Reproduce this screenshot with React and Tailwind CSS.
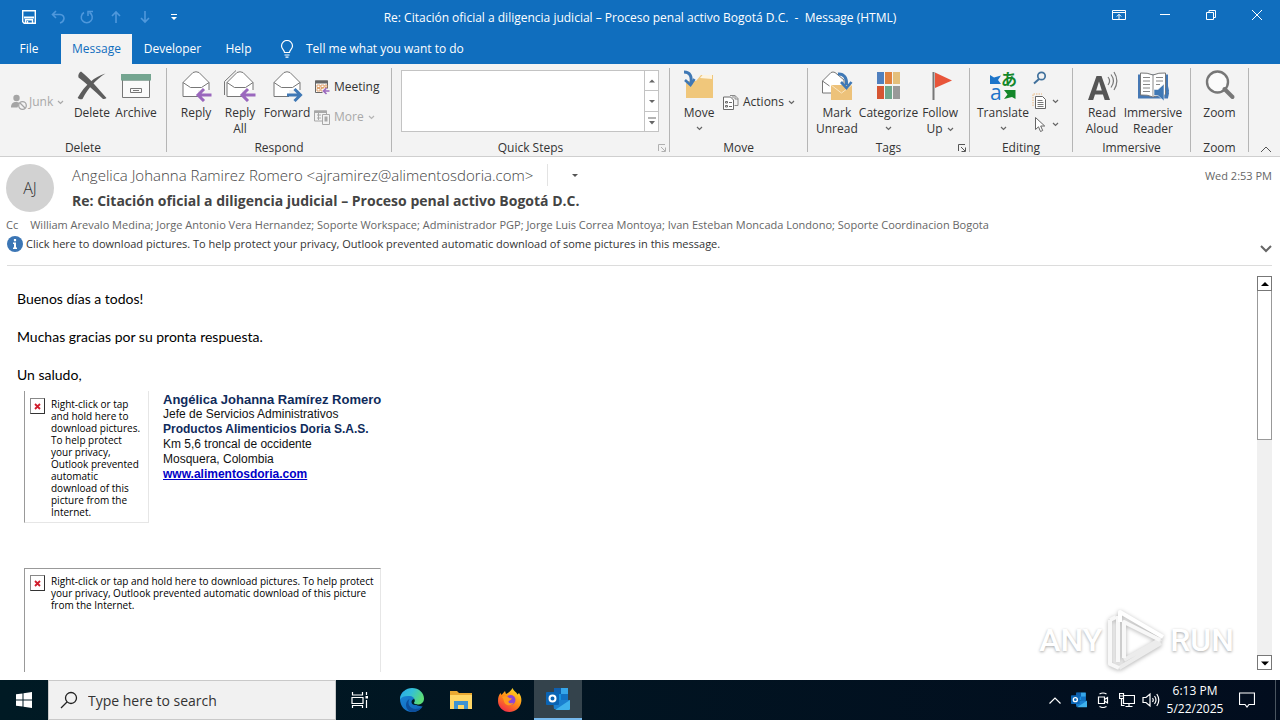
import React from 'react';

const UI = "font-['Open_Sans','Noto_Sans',sans-serif]";

function Caret({ className = '' }) {
  return (
    <svg viewBox="0 0 7 5" className={`h-[5px] w-[7px] shrink-0 ${className}`} fill="none" stroke="currentColor" strokeWidth="1.2">
      <path d="M1 1l2.500 2.500L6 1" />
    </svg>
  );
}

function Triangle({ up = false, bar = false, className = '' }) {
  return (
    <svg viewBox="0 0 8 8" className={`h-2 w-2 shrink-0 ${className}`} fill="currentColor">
      {bar && <path d="M0 0.500h8v1H0z" />}
      <path d={up ? 'M0 6l4-4 4 4z' : bar ? 'M1 4h6L4 7.500z' : 'M0 2.500h8L4 6.500z'} />
    </svg>
  );
}

/* ---------- ribbon icons ---------- */

const Ico = ({ children, className = 'h-8 w-8', box = '0 0 32 32' }) => (
  <svg viewBox={box} className={`${className} shrink-0`} fill="none">
    {children}
  </svg>
);

const DeleteIcon = () => (
  <Ico>
    <path d="M5 1.500C13 8 21 17 30.500 28c-1 1-2.300 1.300-3.500 1C18 20.500 10 13 2.500 7.500 1.800 5 3 2.500 5 1.500z" fill="#5d5d5d" />
    <path d="M29.500 3.500C20 9.500 12.500 17.500 6.500 29c-1.800.6-3.800.2-4.800-1.200C9 15 18 7 29.500 3.500z" fill="#5d5d5d" />
  </Ico>
);

const ArchiveIcon = () => (
  <Ico>
    <path d="M2.500 10h27v17.500h-27z" fill="#fafafa" stroke="#777" />
    <path d="M1 4h30v6.500H1z" fill="#74a590" />
    <path d="M10.500 18.500h11v4h-11z" stroke="#777" />
    <path d="M13 20.500h6" stroke="#777" />
  </Ico>
);

function Envelope() {
  return (
    <>
      <path d="M3 12.500L13 2.500q3-1.500 6 0l10 10v14H3z" fill="#fff" stroke="#777" strokeLinejoin="round" />
      <path d="M3 12.500l7.500 5h11l7.500-5" stroke="#777" />
    </>
  );
}

const ArrowLeft = () => (
  <>
    <path d="M18 20h13v11H18z" fill="#f3f3f3" />
    <path d="M31.500 25H18M24 19l-6 6 6 6" stroke="#9a67bd" strokeWidth="3" />
  </>
);

const ReplyIcon = () => (
  <Ico><Envelope /><ArrowLeft /></Ico>
);

const ReplyAllIcon = () => (
  <Ico>
    <path d="M.500 25V11.500L12 .500" stroke="#777" />
    <Envelope /><ArrowLeft />
  </Ico>
);

const ForwardIcon = () => (
  <Ico>
    <Envelope />
    <path d="M18 20h13v11H18z" fill="#f3f3f3" />
    <path d="M16 25h13.500M23.500 19l6 6-6 6" stroke="#3f78b5" strokeWidth="3" />
  </Ico>
);

const JunkIcon = () => (
  <Ico className="h-4 w-4" box="0 0 16 16">
    <circle cx="5.500" cy="4" r="3.200" fill="#a5a5a5" />
    <path d="M0 13.500C0 9.500 2 8 5 8c1.500 0 2.500.3 3.300 1L6.500 13.500z" fill="#a5a5a5" />
    <circle cx="11.500" cy="11.500" r="3.800" stroke="#a5a5a5" strokeWidth="1.300" fill="#f3f3f3" />
    <path d="M9 9l5 5" stroke="#a5a5a5" strokeWidth="1.300" />
  </Ico>
);

const MeetingIcon = () => (
  <Ico className="h-4 w-4" box="0 0 16 16">
    <path d="M1.500 2h12v11.500h-12z" fill="#fff" stroke="#666" />
    <path d="M1 1.500h13v3H1z" fill="#666" />
    <path d="M3 6h3v2.500H3zM7 6h3v2.500H7zM3 9.500h3V12H3zM7 9.500h3V12H7zM11 6h2v2.500h-2z" stroke="#d99152" strokeWidth=".8" />
    <path d="M8.500 9.500H16V16H8.500z" fill="#f3f3f3" />
    <path d="M15.500 12H9.500M12.500 9l-3 3 3 3" stroke="#9a67bd" strokeWidth="1.600" />
  </Ico>
);

const MoreIcon = () => (
  <Ico className="h-4 w-4" box="0 0 16 16">
    <path d="M.500 2h12v10h-12z" stroke="#a8a8a8" />
    <path d="M0 1.500h13V4H0z" fill="#a8a8a8" />
    <path d="M3 6h4M3 9h4M4.500 4v7" stroke="#a8a8a8" />
    <path d="M8.500 5.500h7v10h-7z" fill="#f3f3f3" stroke="#a8a8a8" />
    <path d="M10.500 7.500h3v5h-3z" fill="#a8a8a8" />
  </Ico>
);

const MoveIcon = () => (
  <Ico>
    <path d="M3 11h10l5-6h12v23H3z" fill="#f0c77b" />
    <path d="M17 8l2.500-3H29v4z" fill="#fdf3df" />
    <path d="M1 2c6 0 8 4 7 12" stroke="#3f78b5" strokeWidth="3" />
    <path d="M2 10l5.500 5 4-6" stroke="#3f78b5" strokeWidth="2.600" />
  </Ico>
);

const ActionsIcon = () => (
  <Ico className="h-4 w-4" box="0 0 16 16">
    <path d="M.500 3h7l3 3v9.500h-10z" fill="#fff" stroke="#6b6b6b" />
    <path d="M7 1.500h5l3 3v7h-3.500M10 1v3M12 1.500V5h3" stroke="#8a8a8a" />
    <path d="M2.500 7.500h2v1.500h-2zM2.500 11.500h2V13h-2zM6 8.500h3M6 12.500h3" stroke="#6b6b6b" />
  </Ico>
);

const MarkUnreadIcon = () => (
  <Ico>
    <path d="M1.500 11L10 2.500q2-1 4 0L23 10v13H1.500z" fill="#fff" stroke="#777" />
    <path d="M1.500 11l7 5" stroke="#777" />
    <path d="M10 15h21v15H10z" fill="#edc27a" />
    <path d="M10 15l10.500 8L31 15" stroke="#fbe6c0" />
    <path d="M17 4c6-.5 9 4 8.500 11" stroke="#3f78b5" strokeWidth="3" />
    <path d="M20 12l5.500 6 5-6" stroke="#3f78b5" strokeWidth="2.600" />
  </Ico>
);

const CategorizeIcon = () => (
  <Ico>
    <path d="M4 2h7v12H4z" fill="#4f7fbe" />
    <path d="M12 2h7v12h-7z" fill="#e0813f" />
    <path d="M20 2h7v12h-7z" fill="#e4bf7b" />
    <path d="M4 16h7v13H4z" fill="#d65532" />
    <path d="M12 16h7v13h-7z" fill="#6fa68c" />
    <path d="M20 16h7v13h-7z" fill="#999" />
  </Ico>
);

const FlagIcon = () => (
  <Ico>
    <path d="M9.500 2v28" stroke="#777" strokeWidth="2" />
    <path d="M11 2.500l17 8-17 7.500z" fill="#e8553a" />
  </Ico>
);

const TranslateIcon = () => (
  <div className="relative h-8 w-8 shrink-0">
    <Ico>
      <path d="M3 5l4 2.500 7-2-3 4.500 3 4H3z" fill="#1c74c9" />
      <path d="M17 20h11.500v9l-3.500-2-8 2 3.500-4.500z" fill="#13872a" />
    </Ico>
    <span className="absolute left-[3px] top-3 text-[21px] leading-5 text-[#1c74c9]">a</span>
    <span className="absolute left-[14px] top-0 font-['Noto_Sans_CJK_JP',sans-serif] text-[16px] font-bold leading-4 text-[#13872a]">あ</span>
  </div>
);

const FindIcon = () => (
  <Ico className="h-4 w-4" box="0 0 16 16">
    <circle cx="9.500" cy="6" r="3.700" stroke="#41719c" strokeWidth="1.700" />
    <path d="M7 9l-5 4.500" stroke="#41719c" strokeWidth="2" />
  </Ico>
);

const RelatedIcon = () => (
  <Ico className="h-4 w-4" box="0 0 16 16">
    <path d="M1 13V1h9" stroke="#e9b77d" strokeDasharray="1.500 1" />
    <path d="M3.500 3.500h7l3 3v9h-10z" fill="#fff" stroke="#666" />
    <path d="M5.500 7.500h5M5.500 9.500h6M5.500 11.500h6M5.500 13.500h6" stroke="#777" />
  </Ico>
);

const SelectIcon = () => (
  <Ico className="h-4 w-4" box="0 0 16 16">
    <path d="M3.500 1.500v12l3-2.700 2 4.700 2.200-1-2-4.500h4z" fill="#fff" stroke="#666" />
  </Ico>
);

const ReadAloudIcon = () => (
  <Ico>
    <path d="M2 30L10.500 6h5L24 30h-5.300l-1.800-5.500H9L7.200 30zM10.200 20.500h5.600L13 11.500z" fill="#555" fillRule="evenodd" />
    <path d="M22 7c2 2.500 2 5.500 0 8M25 4.500c3 4 3 9 0 13M28 2c3.500 5.500 3.500 12.500 0 18" stroke="#777" strokeWidth="1.200" />
  </Ico>
);

const ReaderIcon = () => (
  <Ico>
    <path d="M1 4.500h30v24H1z" fill="#4678b4" />
    <path d="M3.500 3q7-.5 12.500 2 5.500-2.500 12.500-2v22q-7-.5-12.500 2-5.500-2.500-12.500-2z" fill="#fff" stroke="#777" />
    <path d="M16 5v21M6 7.500h7M6 11h7M6 14.500h7M6 18h7M6 21.500h7M19 7.500h7M19 11h7M19 14.500h4" stroke="#888" />
    <path d="M17 19.500h4l6-5.500v17l-6-5.500h-4z" fill="#3f78b5" stroke="#f3f3f3" strokeWidth=".6" />
    <path d="M28.500 18q2.500 4 0 8.500M30.500 16q2.500 6 0 12" stroke="#3f78b5" />
  </Ico>
);

const ZoomIcon = () => (
  <Ico>
    <circle cx="13.500" cy="12" r="10.500" fill="#fbfbfb" stroke="#777" strokeWidth="2.400" />
    <path d="M20.500 19l8 8" stroke="#777" strokeWidth="4" strokeLinecap="round" />
  </Ico>
);

/* ---------- ribbon building blocks ---------- */

function BigButton({ icon, lines, width, menu, inlineMenu }) {
  return (
    <button type="button" className={`flex flex-col items-center pt-[6px] leading-4 ${width}`}>
      {icon}
      <span className="mt-[3px] flex flex-col items-center whitespace-nowrap">
        {lines.map((l, i) => (
          <span key={l} className="flex items-center gap-1">
            {l}
            {inlineMenu && i === lines.length - 1 && <Caret className="text-[#666]" />}
          </span>
        ))}
      </span>
      {menu && <Caret className="mt-[5px] text-[#666]" />}
    </button>
  );
}

function SmallButton({ icon, label, name, menu, muted }) {
  return (
    <button type="button" aria-label={name} className={`flex h-5 items-center gap-1 whitespace-nowrap ${muted ? 'text-[#a8a8a8]' : ''}`}>
      {icon}
      {label}
      {menu && <Caret className={muted ? 'text-[#b5b5b5]' : 'text-[#666]'} />}
    </button>
  );
}

function Launcher({ muted }) {
  return (
    <button type="button" aria-label="More options" className={`absolute bottom-0 right-[3px] ${muted ? 'text-[#b0b0b0]' : 'text-[#555]'}`}>
      <svg viewBox="0 0 8 8" className="h-2 w-2" fill="none" stroke="currentColor">
        <path d="M.500 7V.500H7M3 3l4 4M7.500 3.500v4h-4" />
      </svg>
    </button>
  );
}

function Group({ label, width, launcher, children }) {
  return (
    <section className={`relative my-1 flex shrink-0 flex-col border-r border-[#b5b5b5] ${width}`}>
      <div className="-mt-1 flex flex-1 px-[7px]">{children}</div>
      <h2 className="-mb-1 text-center leading-4">{label}</h2>
      {launcher && <Launcher muted={launcher === 'muted'} />}
    </section>
  );
}

/* ---------- window chrome ---------- */

function QuickAccess() {
  const b = 'flex h-[34px] w-[29px] items-center justify-center';
  return (
    <div className="flex pl-[14px] text-[#4f98dc]">
      <button type="button" aria-label="Save" className={`${b} text-white`}>
        <svg viewBox="0 0 14 14" className="h-[14px] w-[14px]" fill="none" stroke="currentColor" strokeWidth="1.400">
          <path d="M.700.700h12.600v12.600H2.200L.700 11.800z" />
          <path d="M2 7.500h10" strokeWidth="2" />
          <path d="M3.500 13V9.700h7V13M5.500 11v2" />
        </svg>
      </button>
      <button type="button" aria-label="Undo" className={b}>
        <svg viewBox="0 0 14 14" className="h-[14px] w-[14px]" fill="none" stroke="currentColor" strokeWidth="1.600">
          <path d="M5 1L1.500 4.500 5 8M1.500 4.500H9q4 .5 4 4.200Q12.500 12 9 13" />
        </svg>
      </button>
      <button type="button" aria-label="Redo" className={b}>
        <svg viewBox="0 0 14 14" className="h-[14px] w-[14px]" fill="none" stroke="currentColor" strokeWidth="1.500">
          <path d="M9.500 2.500A5.500 5.500 0 1 1 4 2.500M8 6V1.500h5" />
        </svg>
      </button>
      <button type="button" aria-label="Previous item" className={b}>
        <svg viewBox="0 0 14 14" className="h-[14px] w-[14px]" fill="none" stroke="currentColor" strokeWidth="1.600">
          <path d="M7 13V2M3 6l4-4 4 4" />
        </svg>
      </button>
      <button type="button" aria-label="Next item" className={b}>
        <svg viewBox="0 0 14 14" className="h-[14px] w-[14px]" fill="none" stroke="currentColor" strokeWidth="1.600">
          <path d="M7 1v11M3 8l4 4 4-4" />
        </svg>
      </button>
      <button type="button" aria-label="Customize toolbar" className={`${b} text-white`}>
        <svg viewBox="0 0 6 6" className="h-[6px] w-[6px]" fill="currentColor"><path d="M0 0h6v1H0zM0 3h6L3 6z" /></svg>
      </button>
    </div>
  );
}

function WindowControls() {
  const b = 'flex h-[30px] w-[46px] items-center justify-center';
  const s = { fill: 'none', stroke: 'currentColor', viewBox: '0 0 14 12' };
  return (
    <div className="flex justify-end text-white">
      <button type="button" aria-label="Ribbon display options" className={b}>
        <svg {...s} className="h-3 w-[14px]"><path d="M.500 1.500h13v9H.500zM.500 3.500h13M7 10V5.500M4.800 7.500L7 5.300l2.200 2.200" /></svg>
      </button>
      <button type="button" aria-label="Minimize" className={b}>
        <svg {...s} className="h-3 w-[14px]"><path d="M2 5.500h10" /></svg>
      </button>
      <button type="button" aria-label="Restore" className={b}>
        <svg {...s} className="h-3 w-[14px]"><path d="M2.500 3.500h7v7h-7zM5 3.500V1.500h6.500v7h-2" /></svg>
      </button>
      <button type="button" aria-label="Close" className={b}>
        <svg {...s} className="h-3 w-[14px]"><path d="M2 1l10 10M12 1L2 11" /></svg>
      </button>
    </div>
  );
}

function Ribbon() {
  return (
    <div className="flex h-[93px] border-b border-[#cfcfcf] bg-[#f3f3f3] text-xs text-[#333]">
      <Group label="Delete" width="w-[167px]">
        <div className="flex w-[63px] items-center pl-1">
          <button type="button" className="flex items-center gap-[2px] text-[#a8a8a8]">
            <JunkIcon />Junk<Caret className="ml-[2px]" />
          </button>
        </div>
        <BigButton icon={<DeleteIcon />} lines={['Delete']} width="w-11" />
        <BigButton icon={<ArchiveIcon />} lines={['Archive']} width="w-11" />
      </Group>
      <Group label="Respond" width="w-[225px]">
        <BigButton icon={<ReplyIcon />} lines={['Reply']} width="w-11" />
        <BigButton icon={<ReplyAllIcon />} lines={['Reply', 'All']} width="w-11" />
        <BigButton icon={<ForwardIcon />} lines={['Forward']} width="w-[50px]" />
        <div className="flex flex-col gap-[10px] pl-[2px] pt-[13px]">
          <SmallButton icon={<MeetingIcon />} label="Meeting" />
          <SmallButton icon={<MoreIcon />} label="More" menu muted />
        </div>
      </Group>
      <Group label="Quick Steps" width="w-[278px]" launcher="muted">
        <div className="ml-[2px] mr-[3px] mt-[6px] flex h-[62px] flex-1 border border-[#c3c3c3] bg-white">
          <div className="flex-1" />
          <div className="flex w-[14px] flex-col divide-y divide-[#c3c3c3] border-l border-[#c3c3c3] text-[#666]">
            <button type="button" aria-label="Scroll up" className="flex flex-1 items-center justify-center"><Triangle up className="h-[6px] w-[6px]" /></button>
            <button type="button" aria-label="Scroll down" className="flex flex-1 items-center justify-center"><Triangle className="h-[6px] w-[6px]" /></button>
            <button type="button" aria-label="Show all" className="flex flex-1 items-center justify-center"><Triangle bar /></button>
          </div>
        </div>
      </Group>
      <Group label="Move" width="w-[138px]">
        <BigButton icon={<MoveIcon />} lines={['Move']} width="w-11" menu />
        <div className="flex items-center pl-[2px]">
          <SmallButton icon={<ActionsIcon />} label="Actions" menu />
        </div>
      </Group>
      <Group label="Tags" width="w-[162px]" launcher="dark">
        <BigButton icon={<MarkUnreadIcon />} lines={['Mark', 'Unread']} width="w-11" />
        <BigButton icon={<CategorizeIcon />} lines={['Categorize']} width="w-[60px]" menu />
        <BigButton icon={<FlagIcon />} lines={['Follow', 'Up']} width="w-11" inlineMenu />
      </Group>
      <Group label="Editing" width="w-[103px]">
        <BigButton icon={<TranslateIcon />} lines={['Translate']} width="w-[52px]" menu />
        <div className="flex flex-col gap-[3px] pl-[3px] pt-1">
          <SmallButton icon={<FindIcon />} name="Find" />
          <SmallButton icon={<RelatedIcon />} name="Related" menu />
          <SmallButton icon={<SelectIcon />} name="Select" menu />
        </div>
      </Group>
      <Group label="Immersive" width="w-[118px]">
        <BigButton icon={<ReadAloudIcon />} lines={['Read', 'Aloud']} width="w-11" />
        <BigButton icon={<ReaderIcon />} lines={['Immersive', 'Reader']} width="w-[58px]" />
      </Group>
      <Group label="Zoom" width="w-[58px]">
        <BigButton icon={<ZoomIcon />} lines={['Zoom']} width="w-full" />
      </Group>
      <div className="flex flex-1 items-end justify-end pb-[3px] pr-2">
        <button type="button" aria-label="Collapse ribbon">
          <svg viewBox="0 0 12 7" className="h-[7px] w-3" fill="none" stroke="#555"><path d="M1 6l5-5 5 5" /></svg>
        </button>
      </div>
    </div>
  );
}

/* ---------- message ---------- */

function MessageHeader() {
  return (
    <header className="ml-[7px] mr-2 border-b border-[#dcdcdc] pb-3 pt-[7px] text-[#666]">
      <div className="-ml-[1px] flex">
        <div className="flex h-12 w-12 shrink-0 items-center justify-center rounded-full bg-[#d2d2d2] text-base font-light text-[#333]">AJ</div>
        <div className="ml-[18px] min-w-0 flex-1">
          <div className="flex h-[22px] items-center">
            <span className="whitespace-nowrap text-[15px] font-light leading-5 text-[#444]">Angelica Johanna Ramirez Romero &lt;ajramirez@alimentosdoria.com&gt;</span>
            <span className="ml-[14px] h-[22px] border-l border-[#e3e3e3]" />
            <button type="button" aria-label="More actions" className="ml-6 text-[#555]"><Triangle className="h-[6px] w-[6px]" /></button>
          </div>
          <h1 className="mt-[5px] whitespace-nowrap text-sm font-bold leading-5 text-[#444]">Re: Citación oficial a diligencia judicial – Proceso penal activo Bogotá D.C.</h1>
        </div>
        <time className="pt-1 text-[11px] leading-4">Wed 2:53 PM</time>
      </div>
      <div className="-ml-[1px] mt-[5px] flex gap-3 whitespace-nowrap text-[11px] leading-4">
        <span>Cc</span>
        <span>William Arevalo Medina; Jorge Antonio Vera Hernandez; Soporte Workspace; Administrador PGP; Jorge Luis Correa Montoya; Ivan Esteban Moncada Londono; Soporte Coordinacion Bogota</span>
      </div>
      <div className="mt-[3px] flex items-start justify-between">
        <button type="button" className="flex items-center gap-[3px] text-[11px] leading-4 text-[#333]">
          <svg viewBox="0 0 16 16" className="h-4 w-4">
            <circle cx="8" cy="8" r="8" fill="#3c76b5" />
            <path d="M6.900 3h2.200v2.200H6.900zM6 6.500h3v5h1V13H6v-1.500h1V8H6z" fill="#fff" />
          </svg>
          Click here to download pictures. To help protect your privacy, Outlook prevented automatic download of some pictures in this message.
        </button>
        <button type="button" aria-label="Expand header" className="pt-[9px]">
          <svg viewBox="0 0 12 8" className="h-2 w-3" fill="none" stroke="#666" strokeWidth="2"><path d="M1 1l5 5 5-5" /></svg>
        </button>
      </div>
    </header>
  );
}

function BlockedPicture({ lines, className }) {
  return (
    <div className={`flex gap-[6px] overflow-hidden border border-[#e6e6e6] border-l-[#999] pl-[5px] ${className}`}>
      <span className="flex h-4 w-[15px] shrink-0 items-center justify-center border border-[#888] border-b-[#333] border-r-[#333] bg-white">
        <svg viewBox="0 0 7 7" className="h-[7px] w-[7px]" stroke="#d01c2c" strokeWidth="1.800"><path d="M1 1l5 5M6 1L1 6" /></svg>
      </span>
      <p className="whitespace-nowrap text-[10px] leading-3 text-black">
        {lines.map((l) => <span key={l} className="block">{l}</span>)}
      </p>
    </div>
  );
}

function ScrollBar() {
  const b = 'flex h-[15px] w-[15px] items-center justify-center border border-[#777] bg-white text-black';
  return (
    <div className="mb-[2px] flex w-[15px] shrink-0 flex-col bg-[#f0f0f0]">
      <button type="button" aria-label="Scroll up" className={b}><Triangle up /></button>
      <div className="h-[149px] border border-t-0 border-[#999] bg-white" />
      <div className="flex-1" />
      <button type="button" aria-label="Scroll down" className={b}><Triangle /></button>
    </div>
  );
}

function MessageBody() {
  return (
    <main className="mb-2 mt-[10px] flex min-h-0 flex-1 overflow-hidden pr-2">
      <div className="min-w-0 flex-1 pl-[17px] pt-[13px] text-black">
        <div className="flex flex-col gap-[19px] font-['Lato',sans-serif] text-sm leading-[19px]">
          <p>Buenos días a todos!</p>
          <p>Muchas gracias por su pronta respuesta.</p>
          <p>Un saludo,</p>
        </div>
        <div className="ml-[7px] mt-[7px] flex gap-[14px]">
          <BlockedPicture
            className="h-[132px] w-[125px] border-t-0 pb-[5px] pt-[7px]"
            lines={['Right-click or tap', 'and hold here to', 'download pictures.', 'To help protect', 'your privacy,', 'Outlook prevented', 'automatic', 'download of this', 'picture from the', 'Internet.']}
          />
          <address className="whitespace-nowrap pt-[1px] font-['Liberation_Sans',Arial,sans-serif] text-xs not-italic leading-[15px] text-[#111]">
            <div className="text-[13px] font-bold text-[#0f2b5b]">Angélica Johanna Ramírez Romero</div>
            <div>Jefe de Servicios Administrativos</div>
            <div className="font-bold text-[#0f2b5b]">Productos Alimenticios Doria S.A.S.</div>
            <div>Km 5,6 troncal de occidente</div>
            <div>Mosquera, Colombia</div>
            <a href="#site" className="font-bold text-[#0000c8] underline">www.alimentosdoria.com</a>
          </address>
        </div>
        <BlockedPicture
          className="ml-[7px] mt-[45px] h-[160px] w-[357px] border-t-[#999] pt-[6px]"
          lines={['Right-click or tap and hold here to download pictures. To help protect', 'your privacy, Outlook prevented automatic download of this picture', 'from the Internet.']}
        />
      </div>
      <ScrollBar />
    </main>
  );
}

function Watermark() {
  const t = "font-['Roboto',sans-serif] text-[32px] font-medium leading-none text-white [text-shadow:0_1px_3px_rgba(0,0,0,0.35)]";
  return (
    <div className="pointer-events-none absolute bottom-[48px] right-[46px] flex items-center gap-1">
      <span className={t}>ANY</span>
      <svg viewBox="0 0 60 64" className="h-16 w-[60px] overflow-visible drop-shadow-[0_1px_2px_rgba(0,0,0,0.3)]" fill="none" strokeWidth="4" strokeLinejoin="round">
        <path d="M18 52l37-21M13 60l42-25" stroke="#ececec" />
        <path d="M4 12v44l9 4M4 12l6-3M12 8v46M18 50V14l36 18" stroke="#f8f8f8" />
        <path d="M14 14V4l43 25" stroke="#fff" />
      </svg>
      <span className={t}>RUN</span>
    </div>
  );
}

/* ---------- taskbar ---------- */

function OutlookLogo({ className }) {
  return (
    <svg viewBox="0 0 24 24" className={className}>
      <path d="M8 1h14v12H8z" fill="#1490df" />
      <path d="M8 1h7v6H8z" fill="#0f5fae" />
      <path d="M15 1h7v6h-7z" fill="#36a6ea" />
      <path d="M15 7h7v6h-7z" fill="#1272c4" />
      <path d="M7 13h8l9 0v9H8z" fill="#1a80d0" />
      <path d="M9 23l15-10v9q0 1-1 1z" fill="#3fb2ec" />
      <rect x="0" y="5" width="13" height="13" rx="1" fill="#0a64b4" />
      <circle cx="6.500" cy="11.500" r="3" fill="none" stroke="#fff" strokeWidth="2" />
    </svg>
  );
}

function Taskbar() {
  const b = 'flex w-[49px] shrink-0 items-center justify-center';
  const t = 'flex w-6 shrink-0 items-center justify-center';
  return (
    <footer className="flex h-10 shrink-0 bg-linear-to-r from-[#001a24] to-[#020d1e] text-white">
      <button type="button" aria-label="Start" className="flex w-12 items-center justify-center">
        <svg viewBox="0 0 16 16" className="h-4 w-4" fill="currentColor"><path d="M0 2.300L6.500 1.400v6.100H0zM7.500 1.200L16 0v7.500H7.500zM0 8.500h6.500v6.100L0 13.700zM7.500 8.500H16V16l-8.500-1.200z" /></svg>
      </button>
      <label className="flex w-[288px] items-center gap-[10px] border border-[#c9c9c9] bg-[#f1f1f1] pl-[11px] text-[#222]">
        <svg viewBox="0 0 18 18" className="h-[18px] w-[18px] shrink-0" fill="none" stroke="currentColor" strokeWidth="1.300"><circle cx="11" cy="7" r="5.500" /><path d="M7 11l-6 6" /></svg>
        <input type="text" aria-label="Type here to search" placeholder="Type here to search" className="h-8 w-full bg-transparent text-sm outline-none placeholder:text-[#333]" />
      </label>
      <button type="button" aria-label="Task view" className="mr-[3px] flex w-12 shrink-0 items-center justify-center">
        <svg viewBox="0 0 18 16" className="h-4 w-[18px]" fill="none" stroke="currentColor" strokeWidth="1.200"><path d="M1.500 0v3h10V0M1 5.500h11v6H1zM1.500 16v-2.500h10V16M15.500 0v3M15.500 8v8" /><path d="M14.500 4h2.500v2.500h-2.500z" fill="currentColor" stroke="none" /></svg>
      </button>
      <button type="button" aria-label="Edge" className={b}>
        <svg viewBox="0 0 24 24" className="h-6 w-6">
          <defs>
            <linearGradient id="edgeTop" x1="0" y1="0" x2="1" y2="0.400"><stop offset="0" stopColor="#2aa9e8" /><stop offset="0.500" stopColor="#33bfd8" /><stop offset="1" stopColor="#5bdc77" /></linearGradient>
            <linearGradient id="edgeLow" x1="0" y1="0" x2="1" y2="1"><stop offset="0" stopColor="#1b88d8" /><stop offset="1" stopColor="#0f63b8" /></linearGradient>
          </defs>
          <path d="M0 11C0 5 5 1 10 2c5 1 6 5 4.500 8-1.500 3-1 8 8 8.500C20.500 22 16.500 24 12 24 5 24 0 18 0 11z" fill="url(#edgeLow)" />
          <path d="M0 11.500C.5 4.500 6 0 12 0c7 0 12 5 12 10.500 0 4-3 6-6.500 6-3 0-4-1-3.500-2 1.500-2 .5-6-4-6.500C5.500 7.500 1.500 8.500 0 11.500z" fill="url(#edgeTop)" />
          <path d="M9.500 11c-3 5 1 11 8 9.800 2-.3 3.800-1.200 5-2.300-2.500 4-6.500 5.500-10.500 5.500C5 22.500 4 14 9.500 11z" fill="#0d4f9c" />
          <path d="M14.200 14c-.8 1.300.3 2.500 3.300 2.500-2.500 1.300-6 .3-6-2.500 0-1.500 1-2.500 2-3 1 .8 1.200 2 .7 3z" fill="#001a24" />
        </svg>
      </button>
      <button type="button" aria-label="File Explorer" className={b}>
        <svg viewBox="0 0 22 20" className="h-5 w-[22px]"><path d="M0 1h7l2 2h13v16H0z" fill="#e9a932" /><path d="M0 5h22v14H0z" fill="#ffd766" /><path d="M4 19v-8h14v8h-4v-4H8v4z" fill="#3f93d2" /></svg>
      </button>
      <button type="button" aria-label="Firefox" className={b}>
        <svg viewBox="0 0 24 24" className="h-6 w-6">
          <defs>
            <linearGradient id="fox" x1="0.800" y1="0" x2="0.200" y2="1"><stop offset="0" stopColor="#ffe226" /><stop offset="0.500" stopColor="#ff8a16" /><stop offset="1" stopColor="#f0244e" /></linearGradient>
          </defs>
          <path d="M14.500 0c1 3 4 4 5 6.500L21 5c2 3 3 6 2 10-1.500 5.500-6 9-11.500 9C5 24 0 19 0 13c0-4 1-6 2.500-8l1 2L7 3l1 3c2-1 5-3 6.500-6z" fill="url(#fox)" />
          <circle cx="12.500" cy="12" r="5" fill="#8b45d6" />
          <path d="M4 9c3-2 6-1 7 1l3 .5c-1 2-3 1.500-3.500 3 0 2 3 2.500 5 1-1 3-6 4-8.500 1C5.500 13.500 6 11 4 9z" fill="#ff9a1f" />
        </svg>
      </button>
      <button type="button" aria-label="Outlook" className="flex w-12 items-center justify-center border-b-2 border-[#76b9ed] bg-[#34434c]">
        <OutlookLogo className="h-6 w-6" />
      </button>
      <div className="flex-1" />
      <button type="button" aria-label="Show hidden icons" className={t}>
        <svg viewBox="0 0 12 7" className="h-[7px] w-3" fill="none" stroke="currentColor" strokeWidth="1.200"><path d="M.500 6.500L6 1l5.500 5.500" /></svg>
      </button>
      <button type="button" aria-label="Outlook status" className={t}><OutlookLogo className="h-4 w-4" /></button>
      <button type="button" aria-label="Camera in use" className={t}>
        <svg viewBox="0 0 16 16" className="h-4 w-4" fill="none" stroke="currentColor" strokeWidth="1.200"><path d="M3.500 5h6v6.500h-6zM9.500 7.500l3-2v5.500l-3-2M4.500 2Q8 0 11.500 2M4.500 14.500q3.500 2 7 0" /></svg>
      </button>
      <button type="button" aria-label="Network" className={t}>
        <svg viewBox="0 0 16 16" className="h-4 w-4" fill="none" stroke="currentColor" strokeWidth="1.200"><path d="M5 3.500h10.500v8H4.500V7M.500 1.500h4v5h-4zM.500 4h4M2.500 6.500v7h3M10 11.500v3M6.500 14.500h7" /></svg>
      </button>
      <button type="button" aria-label="Volume" className={t}>
        <svg viewBox="0 0 18 16" className="h-4 w-[18px]" fill="none" stroke="currentColor" strokeWidth="1.200"><path d="M1 5.500h3L8 2v12l-4-3.500H1zM10.500 6q1.500 2 0 4M12.500 4q3 4 0 8M14.800 2q4 6 0 12" /></svg>
      </button>
      <button type="button" className="flex w-[64px] flex-col items-center justify-center whitespace-nowrap text-xs leading-[18px]">
        <span>6:13 PM</span>
        <span>5/22/2025</span>
      </button>
      <button type="button" aria-label="Notifications" className="flex w-10 items-center justify-center">
        <svg viewBox="0 0 16 16" className="h-4 w-4" fill="none" stroke="currentColor" strokeWidth="1.200"><path d="M.500 1h15v11.500H10L8 15l-2-2.500H.500z" /></svg>
      </button>
      <div className="ml-2 w-[5px] border-l border-[#4a5560]" />
    </footer>
  );
}

export default function App() {
  return (
    <div className={`relative flex h-screen flex-col overflow-hidden bg-white ${UI}`}>
      <div className="bg-[#106ebe] text-xs text-white">
        <div className="grid h-[34px] grid-cols-[1fr_auto_1fr]">
          <QuickAccess />
          <div className="flex items-center whitespace-pre pt-[2px]">Re: Citación oficial a diligencia judicial – Proceso penal activo Bogotá D.C.  -  Message (HTML)</div>
          <WindowControls />
        </div>
        <nav className="flex h-[30px]">
          <button type="button" className="w-[61px] pr-[3px]">File</button>
          <button type="button" className="w-[71px] bg-[#f3f3f3] text-[#106ebe]">Message</button>
          <button type="button" className="w-[81px]">Developer</button>
          <button type="button" className="w-[51px]">Help</button>
          <button type="button" className="flex items-center gap-3 pl-4">
            <svg viewBox="0 0 14 18" className="h-[18px] w-[14px]" fill="none" stroke="currentColor" strokeWidth="1.200"><path d="M4.500 12.500C4.500 10 1.500 9 1.500 6a5.500 5.500 0 0 1 11 0c0 3-3 4-3 6.500zM4.500 15h5M5.500 17.200h3" /></svg>
            Tell me what you want to do
          </button>
        </nav>
      </div>
      <Ribbon />
      <MessageHeader />
      <MessageBody />
      <Taskbar />
      <Watermark />
    </div>
  );
}
